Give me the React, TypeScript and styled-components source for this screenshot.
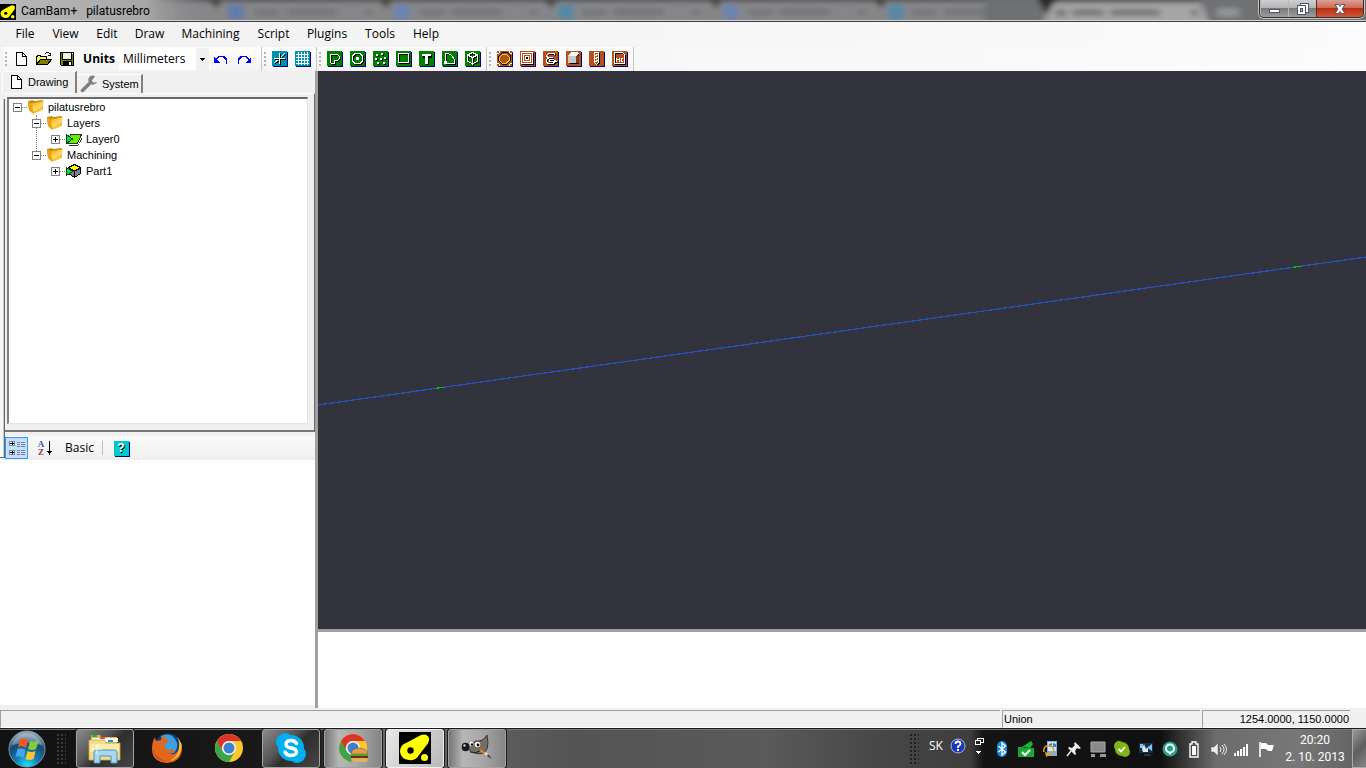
import React from "react";
import styled, { createGlobalStyle, css } from "styled-components";

const GlobalStyle = createGlobalStyle`
  * { box-sizing: border-box; }
  html, body { margin: 0; padding: 0; }
  body { background: #f0f0f0; color: #000; font-family: "Open Sans", "Noto Sans", sans-serif; font-size: 12px; }
  button { font: inherit; color: inherit; border: 0; padding: 0; margin: 0; background: none; }
  svg { display: block; flex: none; }
  ul { list-style: none; margin: 0; padding: 0; }
`;

const uiFont = css`
  font-family: "Open Sans", "Noto Sans", sans-serif;
  font-size: 12px;
  line-height: 16px;
`;

const sansFont = css`
  font-family: "Liberation Sans", Arial, sans-serif;
  font-size: 11px;
  line-height: 16px;
`;

const Window = styled.div`
  display: flex;
  flex-direction: column;
  min-height: 100vh;
`;

/* ---------- title bar ---------- */

const TitleBar = styled.header`
  ${uiFont}
  position: relative;
  display: flex;
  align-items: center;
  height: 22px;
  flex: none;
  overflow: hidden;
  background: #858688;
  border-bottom: 1px solid #3f3f42;
`;

const GlassBackdrop = styled.svg`
  position: absolute;
  inset: 0;
  width: 100%;
  height: 21px;
`;

const TitleContent = styled.div`
  position: relative;
  display: flex;
  align-items: flex-end;
  flex: 1;
  gap: 5px;
  height: 21px;
  border-bottom: 1px solid #d2d2d4;
`;

const TitleText = styled.h1`
  margin: 0;
  font: 400 12px/18px Roboto, "Open Sans", sans-serif;
  white-space: pre;
`;

const WindowButtons = styled.div`
  display: flex;
  align-self: flex-start;
  margin: 0 2px 0 auto;
  height: 18px;
  border: 1px solid #303030;
  border-top: 0;
  border-radius: 0 0 5px 5px;
  overflow: hidden;
  box-shadow: 0 0 0 1px #c4c4c4;
`;

const WindowButton = styled.button<{ $close?: boolean }>`
  display: grid;
  place-items: center;
  width: ${(p) => (p.$close ? 47 : 28)}px;
  border-left: 1px solid ${(p) => (p.$close ? "#5a2a20" : "#b8b8b8")};
  background: ${(p) =>
    p.$close
      ? "linear-gradient(#d9a196 0, #cf6b57 45%, #b92f12 50%, #d2563a 100%)"
      : "linear-gradient(#cfcfcf 0, #b4b4b4 45%, #7a7a7a 50%, #9e9e9e 100%)"};
`;

/* ---------- menu and tool bars ---------- */

const MenuBar = styled.nav`
  ${uiFont}
  display: flex;
  align-items: center;
  flex: none;
  height: 25px;
  padding: 0 6px 2px;
  background: linear-gradient(90deg, #f1f1f1, #fbfbfb);
`;

const MenuItem = styled.button<{ $width: number }>`
  width: ${(p) => p.$width}px;
  height: 22px;
  text-align: center;
  white-space: nowrap;
`;

const ToolBar = styled.div`
  ${uiFont}
  display: flex;
  flex: none;
  height: 24px;
  padding-left: 3px;
  background: linear-gradient(90deg, #f4f4f4, #fbfbfb);
`;

const Strip = styled.div`
  display: flex;
  align-items: center;
  padding: 0 1px;
  background: linear-gradient(#fdfdfd, #f3f3f3);
  border-right: 1px solid #c6c6c6;
  &:first-child { padding-right: 5px; }
`;

const Grip = styled.span`
  width: 6px;
  height: 15px;
  flex: none;
  background: repeating-linear-gradient(#b4b4b4 0 2px, transparent 2px 4px) 1px 0 / 2px 100% no-repeat;
`;

const ToolButton = styled.button`
  display: grid;
  place-items: center;
  width: 23px;
  height: 24px;
  padding: 0 1px 1px 0;
`;

const UnitsLabel = styled.label`
  width: 40px;
  text-align: center;
  font-weight: 700;
`;

const UnitsBox = styled.span`
  position: relative;
  width: 91px;
  height: 22px;
  background: #fff;
  border-right: 1px solid #fff;
`;

const UnitsSelect = styled.select`
  ${uiFont}
  appearance: none;
  width: 100%;
  height: 22px;
  padding: 0 0 0 4px;
  border: 0;
  border-radius: 0;
  color: #000;
  background: linear-gradient(#f0f0f0, #f0f0f0) right / 13px 100% no-repeat, #fff;
`;

const SelectArrow = styled.svg`
  position: absolute;
  right: 4px;
  top: 10px;
  pointer-events: none;
`;

/* ---------- work area ---------- */

const Work = styled.main`
  display: flex;
  flex: 1;
  min-height: 0;
`;

const Side = styled.aside`
  display: flex;
  flex-direction: column;
  flex: none;
  width: 318px;
  background: #f0f0f0;
  border-right: 3px solid #a0a0a0;
`;

const Tabs = styled.div`
  ${sansFont}
  display: flex;
  align-items: flex-end;
  height: 22px;
  padding-left: 2px;
  flex: none;
`;

const Tab = styled.button<{ $active?: boolean }>`
  display: flex;
  align-items: center;
  gap: 4px;
  height: ${(p) => (p.$active ? 22 : 19)}px;
  width: ${(p) => (p.$active ? 75 : 66)}px;
  padding: 0 0 ${(p) => (p.$active ? 2 : 0)}px ${(p) => (p.$active ? 5 : 3)}px;
  border-top: 1px solid #fff;
  border-left: ${(p) => (p.$active ? "1px solid #fff" : "0")};
  border-right: 2px solid #808080;
  white-space: nowrap;
`;

const Upper = styled.section`
  display: flex;
  flex: 3 1 0;
`;

const Edge = styled.div`
  width: 5px;
  margin: 6px 0 2px;
  background: #f7f7f7;
  border-right: 1px solid #696969;
  border-bottom: 1px solid #696969;
  box-shadow: inset -1px 0 #c8c8c8;
`;

const UpperColumn = styled.div`
  display: flex;
  flex-direction: column;
  flex: 1;
`;

const TreeFrame = styled.div`
  display: flex;
  flex: 1;
  padding: 3px 6px 6px 2px;
  border-top: 1px solid #fff;
  border-right: 1px solid #696969;
  border-bottom: 2px solid #777;
`;

const Tree = styled.div`
  ${sansFont}
  flex: 1;
  padding-left: 4px;
  background: #fff;
  border: 1px solid #e3e3e3;
  border-top: 2px solid #696969;
  border-left: 2px solid #808080;
`;

const TreeRow = styled.div<{ $level: number }>`
  position: relative;
  display: flex;
  align-items: center;
  height: 16px;
  padding-left: ${(p) => p.$level * 19}px;
`;

const TreeLabel = styled.span`
  padding-left: 4px;
  white-space: nowrap;
`;

const Branch = styled.ul`
  position: relative;
`;

const Stem = styled.span`
  position: absolute;
  left: 23px;
  top: 0;
  height: 42px;
  border-left: 1px dotted #808080;
`;

const PropBar = styled.div`
  ${uiFont}
  display: flex;
  align-items: center;
  height: 24px;
  margin-top: 4px;
  flex: none;
  background: linear-gradient(#fafafa, #efefef);
`;

const PropButton = styled.button<{ $width: number; $on?: boolean }>`
  display: grid;
  place-items: center;
  width: ${(p) => p.$width}px;
  height: 22px;
  background: ${(p) => (p.$on ? "#c5dff8" : "none")};
  border: ${(p) => (p.$on ? "1px solid #3399ff" : "0")};
`;

const Divider = styled.span`
  width: 1px;
  height: 14px;
  margin-left: 5px;
  background: #bdbdbd;
`;

const PropGrid = styled.section`
  flex: 2 1 0;
  background: #fff;
  border-bottom: 3px solid #f0f0f0;
`;

const Stage = styled.section`
  display: flex;
  flex-direction: column;
  flex: 1;
  min-width: 0;
`;

const Drawing = styled.svg`
  flex: 1 1 0;
  width: 100%;
  min-height: 0;
  background: #33333d;
`;

const Output = styled.div`
  height: 79px;
  flex: none;
  background: #fff;
  border-top: 3px solid #a0a0a0;
`;

/* ---------- status bar ---------- */

const StatusBar = styled.footer`
  ${sansFont}
  display: flex;
  gap: 2px;
  height: 20px;
  flex: none;
  padding: 2px 16px 0 0;
  background: #f0f0f0;
`;

const StatusCell = styled.div<{ $width?: number; $right?: boolean }>`
  flex: ${(p) => (p.$width ? "none" : "1")};
  width: ${(p) => (p.$width ? p.$width + "px" : "auto")};
  padding: 0 1px;
  text-align: ${(p) => (p.$right ? "right" : "left")};
  border-top: 1px solid #a0a0a0;
  border-left: 1px solid #a0a0a0;
  border-bottom: 1px solid #fff;
`;

/* ---------- task bar ---------- */

const TaskBar = styled.div`
  ${uiFont}
  display: flex;
  align-items: center;
  height: 40px;
  flex: none;
  color: #fff;
  border-top: 1px solid #1c1c1c;
  box-shadow: inset 0 1px #77777a;
  background: linear-gradient(90deg, #121212 0, #1a1a1a 23%, #6a6a6a 26%, #5c5c5c 37%, #545454 42%, #5a5a5a 56%, #484848 64%, #3e3e3e 71%, #141414 72%, #101010 85%, #6c6c6c 89%, #777 95%, #606060 100%);
`;

const StartButton = styled.button`
  width: 54px;
  padding-left: 8px;
`;

const DotGrip = styled.span<{ $right: number; $color: string }>`
  width: 9px;
  height: 30px;
  margin: 0 ${(p) => p.$right}px 0 3px;
  flex: none;
  background: radial-gradient(circle at 1px 1px, ${(p) => p.$color} 1px, transparent 1px) 0 0 / 4px 4px;
`;

const Tasks = styled.div`
  display: flex;
  gap: 4px;
  height: 39px;
`;

const TaskButton = styled.button<{ $look: "plain" | "dark" | "light" | "active" }>`
  display: grid;
  place-items: center;
  width: 58px;
  height: 39px;
  padding-bottom: 1px;
  border-radius: 3px;
  ${(p) =>
    p.$look !== "plain" &&
    css`
      border: 1px solid ${p.$look === "active" ? "#f0f0f0" : "#a2a2a2"};
      box-shadow: 0 0 0 1px #1a1a1a;
      background: ${p.$look === "dark"
        ? "linear-gradient(135deg, #8a8a8a 0, #555 38%, #2e2e2e 54%, #454545 100%)"
        : p.$look === "light"
        ? "linear-gradient(90deg, #777 0, #b6b6b6 25%, #a6a6a6 60%, #858585 100%)"
        : "linear-gradient(120deg, #e8e8e8 0, #d2d2d2 45%, #b9b9b9 100%)"};
    `}
`;

const Tray = styled.div`
  display: flex;
  align-items: center;
  margin-left: auto;
  height: 39px;
`;

const LanguageBar = styled.div`
  display: flex;
  padding-bottom: 5px;
`;

const TrayButton = styled.button<{ $width?: number }>`
  display: grid;
  place-items: center;
  width: ${(p) => p.$width ?? 24}px;
  height: 32px;
`;

const Clock = styled.time`
  width: 74px;
  text-align: center;
  font: 400 12px/17px Roboto, "Open Sans", sans-serif;
  white-space: nowrap;
`;

const ShowDesktop = styled.button`
  width: 14px;
  height: 39px;
  border: 1px solid #aaa;
  border-right: 0;
  background: linear-gradient(135deg, #999, #5e5e5e 50%, #858585);
`;

/* ---------- icons ---------- */

const Pixel = ({ children, size = 16 }: { children: React.ReactNode; size?: number }) => (
  <svg width={size} height={size} viewBox={`0 0 ${size} ${size}`} shapeRendering="crispEdges" aria-hidden="true">
    {children}
  </svg>
);

const Tile = ({ fill, children }: { fill: string; children: React.ReactNode }) => (
  <Pixel>
    <path d="M1 1h15v15H1z" fill="#000080" />
    <path d="M0 0h15v15H0z" fill={fill} />
    {children}
  </Pixel>
);

/* White outline with a black copy one pixel down and right. */
const Relief = ({ d, color = "#fff" }: { d: string; color?: string }) => (
  <g fill="none">
    <path d={d} stroke="#000" transform="translate(1 1)" />
    <path d={d} stroke={color} />
  </g>
);

const CamBamIcon = ({ size }: { size: number }) => (
  <svg width={size} height={size} viewBox="0 0 32 32" aria-hidden="true">
    <path d="M0 0h32v32H0z" fill="#000" />
    <path d="M22 3Q28 1 30 6Q31 9 27 14L20 23Q17 29 10 28Q2 27 1 20Q1 13 7 11Z" fill="#ff0" />
    <circle cx="11.500" cy="18.500" r="3.200" fill="#000" />
    <circle cx="25.500" cy="25.500" r="3.500" fill="#ff0" />
  </svg>
);

const PageIcon = () => (
  <Pixel>
    <path d="M3.500 1.500h6l4 4v9h-10z" fill="#fff" stroke="#000" />
    <path d="M9.500 1.500v4h4" fill="none" stroke="#000" />
  </Pixel>
);

const OpenIcon = () => (
  <Pixel>
    <path d="M0.500 13.500v-8h1v-1h3v1h6v3" fill="#ffff80" stroke="#000" />
    <path d="M1 6h9v3H4l-3 4z" fill="#f4f060" />
    <path d="M0.500 13.500l4-5h11l-4 5z" fill="#808000" stroke="#000" />
    <path d="M9 2.500h1M10 1.500h3M13 2.500h1M14 3.500h1M12 4.500h3M14.500 2v3" stroke="#000" fill="none" />
  </Pixel>
);

const SaveIcon = () => (
  <Pixel>
    <path d="M1.500 1.500h13v13h-12l-1-1z" fill="#808000" stroke="#000" />
    <path d="M4 2h8v6H4z" fill="#f0f0f0" />
    <path d="M3.500 2v6.500h9V2" fill="none" stroke="#000" />
    <path d="M4 10h9v4H4z" fill="#000" />
    <path d="M10 11h2v3h-2zM13 2h1v1h-1z" fill="#fff" />
  </Pixel>
);

const ArcArrow = ({ flip }: { flip?: boolean }) => (
  <svg width="16" height="16" viewBox="0 0 16 16" shapeRendering="crispEdges" aria-hidden="true">
    <g transform={flip ? "translate(16 0) scale(-1 1)" : undefined}>
      <path d="M2.500 9.500L6 5.500h4.500l3 3v4" fill="none" stroke="#0000f0" strokeWidth="1.500" />
      <path d="M1 6v6h6z" fill="#0000f0" />
    </g>
  </svg>
);

const teal = "#0091ab";
const green = "#008000";
const rust = "#b3501e";

const toolIcons: Record<string, React.ReactNode> = {
  "Snap to points": (
    <Tile fill={teal}>
      <Relief d="M2 7.500h11M7.500 2v11M9 6l4-4M2 12l4-3" />
    </Tile>
  ),
  "Show grid": (
    <Tile fill={teal}>
      <path d="M1 3.500h13M1 6.500h13M1 9.500h13M1 12.500h13M3.500 1v13M6.500 1v13M9.500 1v13M12.500 1v13" stroke="#fff" />
    </Tile>
  ),
  Polyline: (
    <Tile fill={green}>
      <Relief d="M3.500 12V3.500h7l2 2v2l-2 2h-3v3h-4" />
    </Tile>
  ),
  Circle: (
    <Tile fill={green}>
      <Relief d="M5 2.500h5l2.500 2.500v5l-2.500 2.500h-5l-2.500-2.500v-5z" />
      <path d="M6 6h3v3H6z" fill="#fff" />
    </Tile>
  ),
  "Point list": (
    <Tile fill={green}>
      <path d="M4 4h2v2H4zM9 3h2v2H9zM12 7h2v2h-2zM3 8h2v2H3zM8 8h2v2H8zM5 12h2v2H5zM11 12h2v2h-2z" fill="#000" />
      <path d="M3 3h2v2H3zM8 2h2v2H8zM11 6h2v2h-2zM2 7h2v2H2zM7 7h2v2H7zM4 11h2v2H4zM10 11h2v2h-2z" fill="#fff" />
    </Tile>
  ),
  Rectangle: (
    <Tile fill={green}>
      <Relief d="M2.500 2.500h10v9h-10z" />
    </Tile>
  ),
  Text: (
    <Tile fill={green}>
      <path d="M4 4h9v3H10v7H7V7H4z" fill="#000" />
      <path d="M3 3h9v2H9v8H6V5H3z" fill="#fff" />
    </Tile>
  ),
  Arc: (
    <Tile fill={green}>
      <Relief d="M3.500 12.500v-10h3l3 2 3 4v4z" />
      <path d="M2 10h3v3H2z" fill="#fff" />
    </Tile>
  ),
  Surface: (
    <Tile fill={green}>
      <Relief d="M7.500 1.500l5 2.500v6l-5 3-5-3v-6zM2.500 4l5 2.500 5-2.500M7.500 7v6" />
    </Tile>
  ),
  Profile: (
    <Tile fill={rust}>
      <path d="M5.500 1.500h5l3 3v5l-4 4h-4l-4-4v-4z" fill="none" stroke="#000" />
      <path d="M5.500 3.500h4l2.500 2.500v3.500l-3 3h-3.500l-3-3v-3z" fill={rust} stroke="#e8c820" />
      <path d="M0 2h2v1H0zM2 0h1v2H2zM12 0h1v2h-1zM13 2h2v1h-2zM0 12h2v1H0zM2 13h1v2H2zM12 13h1v2h-1zM13 12h2v1h-2z" fill="#fff" />
    </Tile>
  ),
  Pocket: (
    <Tile fill={rust}>
      <path d="M2 2h12v12H2z" fill="#000" />
      <path d="M1.500 1.500h11v11h-11z" fill={rust} stroke="#fff" />
      <path d="M3.500 3.500h7v7h-7z" fill="none" stroke="#fff" />
      <path d="M5.500 5.500h3v3h-3z" fill="#000" stroke="#fff" />
    </Tile>
  ),
  Engrave: (
    <Tile fill={rust}>
      <Relief d="M11.500 4V2.500h-6l-2 2v1l2 1h4M7 6.500l-4 2v2l2 2h5l2-2v-1l-2-1h-4v2h8" />
    </Tile>
  ),
  "3D profile": (
    <Tile fill={rust}>
      <path d="M4 3h9v10H4z" fill="#501808" />
      <path d="M2 4h8v8H2z" fill="#c8c8c8" />
      <path d="M3 3l3-2h5l2 2-3 2H3z" fill="#fff" />
      <path d="M10 5h3v7h-3z" fill="#8a3818" />
      <path d="M4 12h8v1H4z" fill="#000" />
    </Tile>
  ),
  Drill: (
    <Tile fill={rust}>
      <path d="M6 2h5v11l-2 1-2-1z" fill="#000" />
      <path d="M5.500 1.500h4v10l-2 2-2-2z" fill={rust} stroke="#fff" />
      <path d="M6 5l3-2M6 8l3-2M6 11l3-2" stroke="#fff" />
    </Tile>
  ),
  "NC file": (
    <Tile fill={rust}>
      <Relief d="M2.500 1.500h8l2 2v9h-10z" />
      <path d="M4.500 11V7M7.500 11V7M5 8.500h2M11 7.500H9.500v3H11" stroke="#fff" fill="none" />
    </Tile>
  ),
};

const WrenchIcon = () => (
  <svg width="18" height="18" viewBox="0 0 18 18" aria-hidden="true">
    <path d="M2.500 15.500L9 9" stroke="#808080" strokeWidth="3.600" strokeLinecap="round" />
    <path d="M15 1.200a4.500 4.500 0 1 0 2 5.600l-3.200 1-2.100-2.100z" fill="#808080" />
  </svg>
);

const FolderIcon = () => (
  <svg width="16" height="16" viewBox="0 0 16 16" aria-hidden="true">
    <path d="M0 2l5-1 1 1 9-1v9l-10 4L1 11z" fill="#c98d10" />
    <path d="M4 4.500L15.500 2l-1 9L5 15z" fill="#fbc02a" />
    <path d="M0 2l4 2.500L5 15l-4-4z" fill="#e9a313" />
    <path d="M4.500 8l10.500-5-.5 5L5 13z" fill="#ffe078" opacity=".7" />
  </svg>
);

const LayerIcon = () => (
  <Pixel>
    <path d="M3 14h9l4-8v2l-4 7H3z" fill="#333" />
    <path d="M4.500 3.500h11l-4 9h-10z" fill="#66f000" stroke="#303030" />
    <path d="M0.500 3.500v9l6-4.500z" fill="#00e040" stroke="#064006" />
  </Pixel>
);

const PartIcon = () => (
  <Pixel>
    <path d="M8.500 1.500l6 3v6l-6 4-6-4v-6z" fill="#808080" stroke="#000" />
    <path d="M8.500 2l5.500 3-5.500 3L3 5z" fill="#ff0" />
    <path d="M8.500 8v6M8.500 8l6-3M8.500 8l-6-3" stroke="#000" fill="none" />
    <path d="M0.500 4.500v8l6-4z" fill="#00e040" stroke="#064006" />
  </Pixel>
);

const Expander = ({ open }: { open: boolean }) => (
  <svg width="15" height="16" viewBox="0 0 15 16" shapeRendering="crispEdges" aria-hidden="true">
    <path d="M0.500 4.500h8v8h-8z" fill="#fff" stroke="#808080" />
    <path d={open ? "M2 8.500h5" : "M2 8.500h5M4.500 6v5"} stroke="#000" />
    <path d="M9 8.500h6" stroke="#808080" strokeDasharray="1 1" />
  </svg>
);

const CategoryIcon = () => (
  <Pixel>
    <path d="M0.500 1.500h5v4h-5zM0.500 10.500h5v4h-5z" fill="#fff" stroke="#6d86a8" />
    <path d="M1 3.500h4M3.500 2v3M1 12.500h4M3.500 11v3" stroke="#000" />
    <path d="M8 2.500h3M8 4.500h3M8 6.500h3M8 10.500h3M8 12.500h3M8 14.500h3M12 2.500h4M12 4.500h4M12 6.500h4M12 10.500h4M12 12.500h4M12 14.500h4" stroke="#6f7fa8" />
  </Pixel>
);

const SortMark = styled.span`
  display: flex;
  align-items: center;
  gap: 3px;
`;

const SortLetters = styled.span`
  display: flex;
  flex-direction: column;
  font: 700 9px/8px "Liberation Serif", serif;
  color: #3a55a8;
  & > span { color: #983838; }
`;

const HelpTile = styled.span`
  width: 15px;
  height: 15px;
  color: #fff;
  font: 700 12px/14px "Liberation Sans", sans-serif;
  text-shadow: 1px 1px #000;
  background: #00c8c8;
  box-shadow: 1px 1px #000080;
`;

const StartOrb = () => (
  <svg width="38" height="38" viewBox="0 0 38 38" aria-hidden="true">
    <defs>
      <radialGradient id="orb" cx=".5" cy=".95" r=".9">
        <stop offset="0" stopColor="#20e0ff" />
        <stop offset=".35" stopColor="#1080b8" />
        <stop offset=".7" stopColor="#154a70" />
        <stop offset="1" stopColor="#8fa8b8" />
      </radialGradient>
    </defs>
    <circle cx="19" cy="19" r="18" fill="url(#orb)" stroke="#8394a0" />
    <path d="M4 15a15.500 15.500 0 0 1 30 0q-15-4-30 0z" fill="#fff" opacity=".28" />
    <path d="M12 9q4-2 8 1l-2 8q-4-3-8-1z" fill="#ef5a24" />
    <path d="M22 11q4 2 9-1l-3 9q-4 2-8 0z" fill="#8cc83c" />
    <path d="M9.500 19q4-2 8 1l-2 8q-4-3-8-1z" fill="#45a5e8" />
    <path d="M19.500 21q4 2 8 0l-2 8q-5 2-8 0z" fill="#fcc52c" />
  </svg>
);

const ExplorerIcon = () => (
  <svg width="34" height="32" viewBox="0 0 34 32" aria-hidden="true">
    <path d="M3 3h9l1 2h16v6H3z" fill="#d7b95e" />
    <path d="M4 3h5v2H4z" fill="#10c020" />
    <path d="M4 6h26v4H4z" fill="#fffbe8" />
    <path d="M12 5h5v2h-5z" fill="#e05030" />
    <path d="M20 8h5v2h-5z" fill="#2090e8" />
    <path d="M1 8h15l2 3h14v17H1z" fill="#f2dc8c" stroke="#c8a850" strokeWidth=".8" />
    <path d="M2 12h29v8H2z" fill="#fff2b4" opacity=".7" />
    <path d="M6 31V20q0-2 2-2h18q3 0 3 2v11h-6v-7H12v7z" fill="#a6d8ef" stroke="#4d94bd" />
    <path d="M9 12v10M4 17h10" stroke="#fff" opacity=".8" />
  </svg>
);

const FirefoxIcon = () => (
  <svg width="32" height="32" viewBox="0 0 32 32" aria-hidden="true">
    <circle cx="17" cy="15" r="13.500" fill="#143c80" />
    <path d="M10 4q9-4 14 3t-1 14q-8 3-11-5z" fill="#3d9fdc" />
    <path d="M31 13q1 17-15 18Q1 30 1 17q0-7 3-12 0 3 2 4l4-1q1-4 4-5-1 3 1 4l3 2q-3 2-5 4 0 5 6 5 3-1 5 0-2 4-7 3 5 3 9-1 4-4 2-11 3 2 3 4z" fill="#e4661b" />
    <path d="M26 5q6 6 4 14-3 8-11 10 9-6 9-14 1-5-2-10z" fill="#fbbf34" />
    <path d="M2 17q3 10 13 12-11 0-13-12z" fill="#b83a14" />
  </svg>
);

const ChromeIcon = ({ burger }: { burger?: boolean }) => (
  <svg width="32" height="32" viewBox="0 0 32 32" aria-hidden="true">
    <circle cx="16" cy="16" r="14" fill="#fcc92b" />
    <path d="M3.900 9A14 14 0 0 1 28.100 9H16a7 7 0 0 0-6 3.500l-2 5z" fill="#dc3428" />
    <path d="M3.900 9A14 14 0 0 0 16 30l6-10.500a7 7 0 0 1-12 0z" fill="#3ca44b" />
    <circle cx="16" cy="16" r="7" fill="#f4f4f4" />
    <circle cx="16" cy="16" r="5.500" fill="#3f7fd0" />
    {burger && (
      <g>
        <path d="M14 22q1-6 8-6 8 0 9 6z" fill="#dda050" stroke="#8a5818" strokeWidth=".6" />
        <path d="M14 22h17v2H14z" fill="#58a028" />
        <path d="M14 24h17v2H14z" fill="#66301a" />
        <path d="M14 26h17q0 4-3 4H17q-3 0-3-4z" fill="#e2b060" />
      </g>
    )}
  </svg>
);

const SkypeIcon = () => (
  <svg width="32" height="32" viewBox="0 0 32 32" aria-hidden="true">
    <circle cx="10" cy="10" r="9" fill="#00aff0" />
    <circle cx="22" cy="22" r="9" fill="#00aff0" />
    <circle cx="16" cy="16" r="13" fill="#00aff0" />
    <path d="M21.500 11.500Q20 8.500 16 8.500q-5 0-5 3.700 0 2.800 5 3.800 5.500 1 5.500 4t-5.500 3.500q-4.500 0-6-3.500" fill="none" stroke="#fff" strokeWidth="3.400" strokeLinecap="round" />
  </svg>
);

const GimpIcon = () => (
  <svg width="32" height="32" viewBox="0 0 32 32" aria-hidden="true">
    <path d="M8 12q4-1 7-3 7 1 11-6 2 9 0 14-3 6-10 4.500-7-1-9-5z" fill="#756e62" stroke="#393630" />
    <ellipse cx="4.500" cy="15" rx="3.800" ry="4.200" fill="#15181c" />
    <circle cx="3.500" cy="13.500" r="1.200" fill="#ccc" />
    <circle cx="10.500" cy="12" r="2.200" fill="#fff" />
    <circle cx="16.500" cy="12.500" r="2.700" fill="#fff" />
    <circle cx="11" cy="12.500" r="1.200" />
    <circle cx="17" cy="13" r="1.400" />
    <path d="M9 20q5 2 10-1" fill="none" stroke="#282520" />
    <path d="M19 18l6 4" stroke="#e88a20" strokeWidth="2" />
    <path d="M24 21l4 3" stroke="#ddd" strokeWidth="2.400" />
    <path d="M27 22l4 5-5-3z" fill="#333" />
  </svg>
);

const trayIcons: Array<[string, React.ReactNode]> = [
  ["Bluetooth", <g><rect x="5" y="2" width="10" height="16" rx="5" fill="#1686d9" /><path d="M6.500 7l7 6-3.500 3V4l3.500 3-7 6" fill="none" stroke="#fff" strokeWidth="1.300" /></g>],
  ["Sync folder", <g><path d="M6 8l9-6 2 3-3 4z" fill="#16b830" /><path d="M2 8h5l1 1h10v9H2z" fill="#19a63a" /><path d="M6 13l3 3 5-5" fill="none" stroke="#fff" strokeWidth="2" /></g>],
  ["Windows update", <g><path d="M7 2h10v15H7z" fill="#7ab2e8" /><path d="M8 3h8v9H8z" fill="#d6ebfc" /><path d="M9 5l3-1v4H9zM13 4l3 1v3h-3z" fill="#3880d0" /><path d="M4 13a5 5 0 1 1 7 3" fill="none" stroke="#f09a20" strokeWidth="1.600" /><path d="M5 13l6 2-5 3z" fill="#f0a020" /></g>],
  ["Pin", <g><path d="M11 3l6 6-2 1-2-1-2 3 1 3-1 1-7-7 1-1 3 1 3-3-1-1z" fill="#eee" /><path d="M7 12l-4 5" stroke="#eee" strokeWidth="1.500" /></g>],
  ["Display", <g><path d="M3 3h14v10H3z" fill="#8a8a8a" stroke="#aaa" /><path d="M3 15h4v3H3zM12 15h6v3h-6z" fill="#999" /></g>],
  ["Skype", <g><circle cx="7" cy="7" r="5" fill="#80b418" /><circle cx="13" cy="13" r="5" fill="#80b418" /><circle cx="10" cy="10" r="7" fill="#80b418" /><path d="M6.500 10l2.500 2.500 4-4.500" fill="none" stroke="#fff" strokeWidth="1.800" /></g>],
  ["Audio manager", <g><path d="M3 4h14v10H3z" fill="#123350" /><path d="M4 5h3v4H4zM12 8l4-3v7l-4-3z" fill="#8cc2f0" /><path d="M6 10l2-5 2 5 2-2v5H7z" fill="#e0e8f0" /><path d="M8 16h7" stroke="#555" strokeWidth="1" /></g>],
  ["Messenger", <g><circle cx="10" cy="10" r="7.500" fill="#26a088" /><circle cx="10" cy="9.500" r="4" fill="none" stroke="#fff" strokeWidth="2" /><path d="M8 13l2 3 2-3z" fill="#fff" /></g>],
  ["Battery", <g><path d="M8 3h4v2h2v13H6V5h2z" fill="none" stroke="#fff" strokeWidth="1.400" /><path d="M8 7h4v9H8z" fill="#fff" /></g>],
  ["Volume", <g><path d="M3 8h3l4-4v13l-4-4H3z" fill="#eee" stroke="#555" strokeWidth=".5" /><path d="M12 8q2 2 0 5M14 6q4 4 0 9M16 5q5 5 0 11" fill="none" stroke="#eee" /></g>],
  ["Network", <path d="M2 14h2v3H2zM5 12h2v5H5zM8 10h2v7H8zM11 8h2v9h-2zM14 5h2v12h-2z" fill="#fff" shapeRendering="crispEdges" />],
  ["Action center", <g><path d="M4 3v15" stroke="#fff" strokeWidth="1.600" /><path d="M5 4h5l2 2h6l-2 6h-4l-2-2H5z" fill="#fff" /></g>],
];

/* ---------- content ---------- */

const menu: Array<[string, number]> = [
  ["File", 38], ["View", 43], ["Edit", 40], ["Draw", 45], ["Machining", 77],
  ["Script", 49], ["Plugins", 58], ["Tools", 48], ["Help", 44],
];

const treeTail: Array<{ label: string; level: number; open: boolean; icon: React.ReactNode }> = [
  { label: "Layers", level: 1, open: true, icon: <FolderIcon /> },
  { label: "Layer0", level: 2, open: false, icon: <LayerIcon /> },
  { label: "Machining", level: 1, open: true, icon: <FolderIcon /> },
  { label: "Part1", level: 2, open: false, icon: <PartIcon /> },
];

const IconTools = ({ names }: { names: string[] }) => (
  <Strip>
    <Grip />
    {names.map((name) => (
      <ToolButton key={name} aria-label={name} title={name}>{toolIcons[name]}</ToolButton>
    ))}
  </Strip>
);

/* Out-of-focus browser tabs seen through the glass frame. */
const Backdrop = () => (
  <GlassBackdrop viewBox="0 0 1366 21" preserveAspectRatio="none" aria-hidden="true">
    <defs>
      <filter id="haze" x="-5%" y="-50%" width="110%" height="200%"><feGaussianBlur stdDeviation="3 2" /></filter>
      <linearGradient id="glow">
        <stop offset="0" stopColor="#b9b9b9" />
        <stop offset=".7" stopColor="#a6a6a6" />
        <stop offset="1" stopColor="#858688" stopOpacity="0" />
      </linearGradient>
    </defs>
    <path d="M0 0h1366v21H0z" fill="#858688" />
    <g filter="url(#haze)">
      <path d="M-20-8h1410v10H-20z" fill="#5c5c5d" />
      {[215, 385, 550, 715, 880].map((x) => <path key={x} d={`M${x - 6}-2h12l-4 11z`} fill="#45423f" />)}
      {[[236, "#5f7bb0"], [402, "#6a83b5"], [566, "#5288aa"], [731, "#6883b4"], [896, "#5288aa"]].map(([x, c]) => (
        <path key={x} d={`M${Number(x) - 7} 5h14v14h-14z`} fill={String(c)} />
      ))}
      {[255, 420, 582, 748, 912].map((x) => (
        <path key={x} d={`M${x} 9h24v7h-24zM${x + 32} 8h50v8h-50zM${x + 110} 10h8v6h-8z`} fill="#77787a" />
      ))}
      <path d="M985-2h66l-10 25H985z" fill="#6e6f71" />
      <path d="M1200-4h190v29h-180z" fill="#707173" />
      <path d="M1036-4h22l-12 18z" fill="#2c2a28" />
      <path d="M1054 4h146l10 20H1044z" fill="#a6a6a6" />
      <path d="M1056 9h10v8h-10zM1072 9h32v7h-32zM1110 9h50v7h-50zM1191 9h7v7h-7z" fill="#7c7c7d" />
      <path d="M1217 8h22v9h-22z" fill="#929598" />
    </g>
    <path d="M0 0h210v21H0z" fill="url(#glow)" />
  </GlassBackdrop>
);

export default function App() {
  return (
    <>
      <GlobalStyle />
      <Window>
        <TitleBar>
          <Backdrop />
          <TitleContent>
            <CamBamIcon size={16} />
            <TitleText>{"CamBam+   pilatusrebro"}</TitleText>
            <WindowButtons>
              <WindowButton aria-label="Minimize">
                <Pixel><path d="M2.500 8.500h10v3h-10z" fill="#fff" stroke="#505468" /></Pixel>
              </WindowButton>
              <WindowButton aria-label="Restore">
                <Pixel>
                  <path d="M5.500 2.500h8v9h-8z" fill="#fff" stroke="#505468" />
                  <path d="M2.500 4.500h8v9h-8z" fill="#fff" stroke="#505468" />
                  <path d="M5.500 7.500h2v3h-2z" fill="#aaa" stroke="#505468" />
                </Pixel>
              </WindowButton>
              <WindowButton $close aria-label="Close">
                <svg width="14" height="14" viewBox="0 0 14 14" aria-hidden="true">
                  <path d="M2 2.500h3.500l1.500 2 1.500-2H12L9 7l3 4.500H8.500L7 9.500l-1.500 2H2L5 7z" fill="#fff" stroke="#54546a" />
                </svg>
              </WindowButton>
            </WindowButtons>
          </TitleContent>
        </TitleBar>

        <MenuBar>
          {menu.map(([label, width]) => <MenuItem key={label} $width={width}>{label}</MenuItem>)}
        </MenuBar>

        <ToolBar>
          <Strip>
            <Grip />
            <ToolButton aria-label="New"><PageIcon /></ToolButton>
            <ToolButton aria-label="Open"><OpenIcon /></ToolButton>
            <ToolButton aria-label="Save"><SaveIcon /></ToolButton>
            <UnitsLabel htmlFor="units">Units</UnitsLabel>
            <UnitsBox>
              <UnitsSelect id="units" defaultValue="Millimeters">
                <option>Millimeters</option>
                <option>Inches</option>
              </UnitsSelect>
              <SelectArrow width="5" height="3" viewBox="0 0 5 3" shapeRendering="crispEdges" aria-hidden="true">
                <path d="M0 0h5v1H0zM1 1h3v1H1zM2 2h1v1H2z" />
              </SelectArrow>
            </UnitsBox>
            <ToolButton aria-label="Undo"><ArcArrow /></ToolButton>
            <ToolButton aria-label="Redo"><ArcArrow flip /></ToolButton>
          </Strip>
          <IconTools names={["Snap to points", "Show grid"]} />
          <IconTools names={["Polyline", "Circle", "Point list", "Rectangle", "Text", "Arc", "Surface"]} />
          <IconTools names={["Profile", "Pocket", "Engrave", "3D profile", "Drill", "NC file"]} />
        </ToolBar>

        <Work>
          <Side>
            <Tabs role="tablist">
              <Tab $active role="tab" aria-selected="true"><PageIcon />Drawing</Tab>
              <Tab role="tab" aria-selected="false"><WrenchIcon />System</Tab>
            </Tabs>
            <Upper>
              <Edge />
              <UpperColumn>
                <TreeFrame>
                  <Tree>
                    <TreeRow $level={0}><Expander open /><FolderIcon /><TreeLabel>pilatusrebro</TreeLabel></TreeRow>
                    <Branch>
                      <Stem />
                      {treeTail.map((n) => (
                        <li key={n.label}>
                          <TreeRow $level={n.level}><Expander open={n.open} />{n.icon}<TreeLabel>{n.label}</TreeLabel></TreeRow>
                        </li>
                      ))}
                    </Branch>
                  </Tree>
                </TreeFrame>
                <PropBar>
                  <PropButton $width={23} $on aria-label="Categorized"><CategoryIcon /></PropButton>
                  <PropButton $width={34} aria-label="Alphabetical">
                    <SortMark>
                      <SortLetters>A<span>Z</span></SortLetters>
                      <svg width="5" height="14" viewBox="0 0 5 14" shapeRendering="crispEdges" aria-hidden="true">
                        <path d="M2 0h1v14H2zM0 10h5v1H0zM1 11h3v1H1z" />
                      </svg>
                    </SortMark>
                  </PropButton>
                  <PropButton $width={35}>Basic</PropButton>
                  <Divider />
                  <PropButton $width={36} aria-label="Help"><HelpTile>?</HelpTile></PropButton>
                </PropBar>
              </UpperColumn>
            </Upper>
            <PropGrid />
          </Side>
          <Stage>
            <Drawing viewBox="0 0 1048 558" preserveAspectRatio="none" shapeRendering="crispEdges" role="img" aria-label="Drawing view">
              <path d="M0 334L1048 186" stroke="#2850c0" strokeWidth="1.250" fill="none" />
              <path d="M118 317.300L126 316.200M975 196.300L983 195.200" stroke="#00c020" strokeWidth="1.250" fill="none" />
            </Drawing>
            <Output />
          </Stage>
        </Work>

        <StatusBar>
          <StatusCell />
          <StatusCell $width={198}>Union</StatusCell>
          <StatusCell $width={148} $right>1254.0000, 1150.0000</StatusCell>
        </StatusBar>

        <TaskBar>
          <StartButton aria-label="Start"><StartOrb /></StartButton>
          <DotGrip $right={10} $color="#3c3c3e" />
          <Tasks>
            <TaskButton $look="dark" aria-label="Explorer"><ExplorerIcon /></TaskButton>
            <TaskButton $look="plain" aria-label="Firefox"><FirefoxIcon /></TaskButton>
            <TaskButton $look="plain" aria-label="Chrome"><ChromeIcon /></TaskButton>
            <TaskButton $look="dark" aria-label="Skype"><SkypeIcon /></TaskButton>
            <TaskButton $look="light" aria-label="Chrome profile"><ChromeIcon burger /></TaskButton>
            <TaskButton $look="active" aria-label="CamBam"><CamBamIcon size={32} /></TaskButton>
            <TaskButton $look="light" aria-label="GIMP"><GimpIcon /></TaskButton>
          </Tasks>
          <Tray>
            <DotGrip $right={5} $color="#202020" />
            <LanguageBar>
              <TrayButton>SK</TrayButton>
              <TrayButton $width={20} aria-label="Language help">
                <svg width="16" height="16" viewBox="0 0 16 16" aria-hidden="true">
                  <circle cx="8" cy="8" r="7" fill="#1838b8" stroke="#a8b8e0" />
                  <path d="M5.500 6q0-2.500 2.500-2.500T10.500 6Q10.500 7 8 8.500V10" fill="none" stroke="#fff" strokeWidth="1.800" />
                  <path d="M7 11h2v2H7z" fill="#fff" />
                </svg>
              </TrayButton>
              <TrayButton $width={22} aria-label="Language options">
                <Pixel>
                  <path d="M6.500 0.500h6v4h-6z" fill="none" stroke="#fff" />
                  <path d="M4.500 2.500h5v4h-5z" fill="#222" stroke="#fff" />
                  <path d="M5 13h5v1H5zM6 14h3v1H6zM7 15h1v1H7z" fill="#fff" />
                </Pixel>
              </TrayButton>
            </LanguageBar>
            {trayIcons.map(([name, drawing]) => (
              <TrayButton key={name} aria-label={name}>
                <svg width="20" height="20" viewBox="0 0 20 20" aria-hidden="true">{drawing}</svg>
              </TrayButton>
            ))}
            <Clock>20:20<br />2. 10. 2013</Clock>
            <ShowDesktop aria-label="Show desktop" />
          </Tray>
        </TaskBar>
      </Window>
    </>
  );
}
